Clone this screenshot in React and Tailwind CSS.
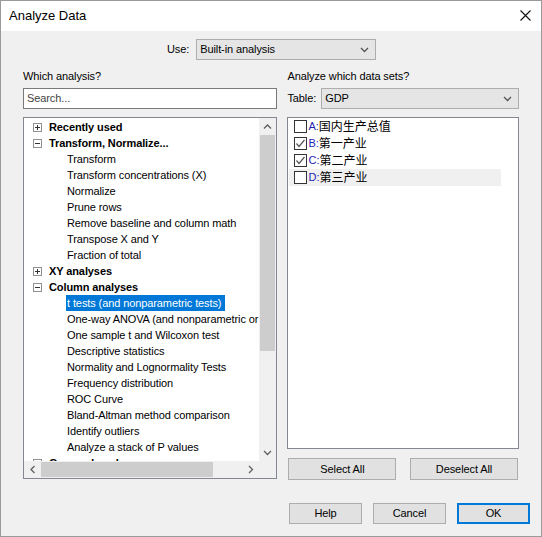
import { useState } from 'react';

const tree = [
  { label: 'Recently used', group: true, open: false },
  { label: 'Transform, Normalize...', group: true, open: true },
  { label: 'Transform' },
  { label: 'Transform concentrations (X)' },
  { label: 'Normalize' },
  { label: 'Prune rows' },
  { label: 'Remove baseline and column math' },
  { label: 'Transpose X and Y' },
  { label: 'Fraction of total' },
  { label: 'XY analyses', group: true, open: false },
  { label: 'Column analyses', group: true, open: true },
  { label: 't tests (and nonparametric tests)', selected: true },
  { label: 'One-way ANOVA (and nonparametric or mixed)' },
  { label: 'One sample t and Wilcoxon test' },
  { label: 'Descriptive statistics' },
  { label: 'Normality and Lognormality Tests' },
  { label: 'Frequency distribution' },
  { label: 'ROC Curve' },
  { label: 'Bland-Altman method comparison' },
  { label: 'Identify outliers' },
  { label: 'Analyze a stack of P values' },
  { label: 'Grouped analyses', group: true, open: false },
];

const dataSets = [
  { key: 'A', name: '国内生产总值', checked: false },
  { key: 'B', name: '第一产业', checked: true },
  { key: 'C', name: '第二产业', checked: true },
  { key: 'D', name: '第三产业', checked: false, hover: true },
];

function Chevron({ dir = 'down', className = '' }) {
  const pts = {
    down: '1,1 4.5,4.5 8,1',
    up: '1,4.5 4.5,1 8,4.5',
    left: '4.5,1 1,4.5 4.5,8',
    right: '1,1 4.5,4.5 1,8',
  }[dir];
  const w = dir === 'left' || dir === 'right' ? 6 : 9;
  const h = dir === 'left' || dir === 'right' ? 9 : 6;
  return (
    <svg width={w} height={h} viewBox={`0 0 ${w} ${h}`} className={className}>
      <polyline points={pts} fill="none" stroke="currentColor" strokeWidth="1.3" />
    </svg>
  );
}

function Expander({ open }) {
  return (
    <svg width="9" height="9" viewBox="0 0 9 9">
      <rect x="0.5" y="0.5" width="8" height="8" fill="white" stroke="#919191" />
      <line x1="2" y1="4.5" x2="7" y2="4.5" stroke="#333" />
      {!open && <line x1="4.5" y1="2" x2="4.5" y2="7" stroke="#333" />}
    </svg>
  );
}

function Select({ value, className = '' }) {
  return (
    <div className={`flex items-center justify-between border border-[#adadad] bg-[#e5e5e5] pl-[3px] pr-[6px] ${className}`}>
      <span>{value}</span>
      <Chevron className="text-[#555]" />
    </div>
  );
}

function Button({ children, primary, className = '' }) {
  return (
    <button
      type="button"
      className={`flex items-center justify-center bg-[#e1e1e1] ${primary ? 'border-2 border-[#0078d7]' : 'border border-[#adadad]'} ${className}`}
    >
      {children}
    </button>
  );
}

export default function App() {
  const [sets, setSets] = useState(dataSets);

  return (
    <div className="flex h-[537px] w-[542px] flex-col border border-[#9a9a9a] bg-[#f0f0f0] text-[11px] tracking-[-0.1px] text-black" style={{ fontFamily: '"Liberation Sans", "Noto Sans CJK SC", sans-serif' }}>
      <div className="flex h-[30px] shrink-0 items-center justify-between bg-white pb-[1px] pl-[8px] pr-[10px]">
        <span className="text-[13px] tracking-normal">Analyze Data</span>
        <svg width="11" height="11" viewBox="0 0 11 11">
          <path d="M0.5 0.5 L10.5 10.5 M10.5 0.5 L0.5 10.5" stroke="#111" strokeWidth="1.1" />
        </svg>
      </div>

      <div className="flex flex-1 flex-col px-[22px]">
        <div className="mt-[8px] flex h-[21px] items-center pl-[144px]">
          <span className="mr-[7px]">Use:</span>
          <Select value="Built-in analysis" className="h-[21px] w-[180px]" />
        </div>

        <div className="mt-[10px] flex gap-[10px]">
          <div className="flex w-[256px] flex-col">
            <span className="h-[13px] leading-[13px]">Which analysis?</span>
            <div className="mt-[5px] flex h-[21px] items-center border border-[#7a7a7a] bg-white px-[3px] text-[#444]">Search...</div>
            <div className="mt-[8px] grid h-[362px] grid-cols-[1fr_17px] grid-rows-[1fr_17px] border border-[#828790] bg-white">
              <div className="overflow-hidden pt-[1px]">
                {tree.map((item) => (
                  <div key={item.label} className="flex h-[16px] items-center whitespace-nowrap">
                    {item.group ? (
                      <>
                        <span className="ml-[9px] flex w-[16px] items-center">
                          <Expander open={item.open} />
                        </span>
                        <span className="font-bold">{item.label}</span>
                      </>
                    ) : (
                      <span
                        className={`ml-[42px] px-[1px] leading-[16px] ${item.selected ? 'bg-[#0078d7] pr-[4px] text-white' : ''}`}
                      >
                        {item.label}
                      </span>
                    )}
                  </div>
                ))}
              </div>
              <div className="flex flex-col bg-[#f0f0f0]">
                <div className="flex h-[17px] items-center justify-center text-[#606060]">
                  <Chevron dir="up" />
                </div>
                <div className="mx-[1px] h-[216px] bg-[#cdcdcd]" />
                <div className="flex-1" />
                <div className="flex h-[17px] items-center justify-center text-[#606060]">
                  <Chevron dir="down" />
                </div>
              </div>
              <div className="flex items-center bg-[#f0f0f0]">
                <div className="flex w-[17px] items-center justify-center text-[#606060]">
                  <Chevron dir="left" />
                </div>
                <div className="my-[1px] h-[15px] w-[172px] bg-[#cdcdcd]" />
                <div className="flex-1" />
                <div className="flex w-[17px] items-center justify-center text-[#606060]">
                  <Chevron dir="right" />
                </div>
              </div>
              <div className="bg-[#f0f0f0]" />
            </div>
          </div>

          <div className="flex w-[233px] flex-col">
            <span className="h-[13px] leading-[13px]">Analyze which data sets?</span>
            <div className="mt-[5px] flex h-[21px] items-center">
              <span className="mr-[5px]">Table:</span>
              <Select value="GDP" className="h-[21px] flex-1" />
            </div>
            <div className="mt-[8px] h-[332px] border border-[#828790] bg-white px-[1px]">
              {sets.map((s, i) => (
                <div
                  key={s.key}
                  className={`flex h-[17px] w-[212px] items-center pl-[5px] tracking-normal ${s.hover ? 'bg-[#f0f0f0]' : ''}`}
                  onClick={() => setSets((p) => p.map((x, j) => (j === i ? { ...x, checked: !x.checked } : x)))}
                >
                  <span className="mr-[1px] flex h-[13px] w-[13px] items-center justify-center border border-[#333] bg-white">
                    {s.checked && (
                      <svg width="11" height="11" viewBox="0 0 11 11">
                        <polyline points="1.5,5.5 4,8.5 9.5,2" fill="none" stroke="#555" strokeWidth="1.2" />
                      </svg>
                    )}
                  </span>
                  <span className="text-[11px] text-[#1e1eb4]">{s.key}:</span>
                  <span className="text-[12px]">{s.name}</span>
                </div>
              ))}
            </div>
            <div className="mt-[9px] flex justify-between pl-[1px] pr-[1px]">
              <Button className="h-[22px] w-[108px]">Select All</Button>
              <Button className="h-[22px] w-[108px]">Deselect All</Button>
            </div>
          </div>
        </div>

        <div className="mt-[23px] flex justify-end gap-[11px]">
          <Button className="h-[21px] w-[73px]">Help</Button>
          <Button className="h-[21px] w-[73px]">Cancel</Button>
          <Button primary className="-mr-[11px] h-[21px] w-[73px]">OK</Button>
        </div>
      </div>
    </div>
  );
}
